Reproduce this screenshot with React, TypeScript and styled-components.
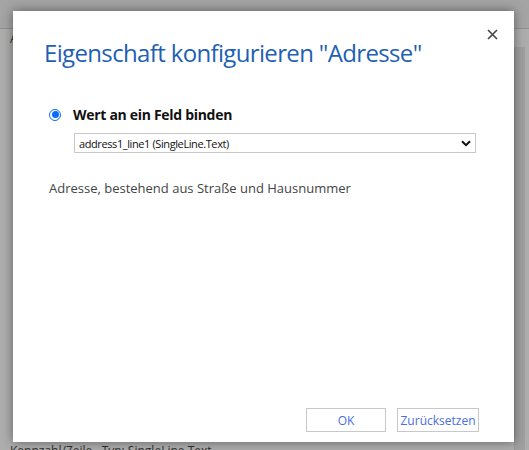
import React from "react";
import styled, { createGlobalStyle } from "styled-components";

const Global = createGlobalStyle`
  html, body { margin: 0; padding: 0; }
  body {
    width: 529px;
    height: 450px;
    overflow: hidden;
    background: #b4b4b4;
    font-family: "Open Sans", "Noto Sans", sans-serif;
  }
`;

const Page = styled.div`
  position: relative;
  width: 529px;
  height: 450px;
  display: flex;
  flex-direction: column;
  background: #f4f4f4;
`;

const TopBar = styled.div`
  height: 28px;
  border-bottom: 1px solid #d0d0d0;
  background: #f0f0f0;
`;

const PageBody = styled.div`
  flex: 1;
  display: flex;
  background: #ffffff;
`;

const PageContent = styled.div`
  flex: 1;
  display: flex;
  flex-direction: column;
  justify-content: space-between;
  padding: 2px 0 0 10px;
  color: #333;
  font-size: 12px;
  line-height: 16px;
  margin-bottom: -9px;
`;

const Scrollbar = styled.div`
  width: 10px;
  margin: 18px 4px 0 0;
  background: #e8e8e8;
  border-left: 1px solid #d8d8d8;
`;

const Overlay = styled.div`
  position: absolute;
  inset: 0;
  background: rgba(40, 40, 40, 0.38);
  display: flex;
  align-items: flex-start;
  padding: 11px 0 0 13px;
`;

const Dialog = styled.div`
  width: 501px;
  height: 431px;
  background: #ffffff;
  box-shadow: 0 0 10px rgba(0, 0, 0, 0.45);
  display: flex;
  flex-direction: column;
  box-sizing: border-box;
  padding: 24px 38px 10px 31px;
  position: relative;
`;

const Header = styled.div`
  display: flex;
  justify-content: space-between;
  align-items: flex-start;
`;

const Title = styled.h1`
  margin: 0;
  font-family: "Open Sans", sans-serif;
  font-weight: 400;
  font-size: 24px;
  line-height: 36px;
  color: #1f5fb4;
  letter-spacing: -0.65px;
`;

const CloseButton = styled.button`
  position: absolute;
  top: 16px;
  right: 14px;
  border: 0;
  background: none;
  padding: 2px;
  cursor: pointer;
  display: flex;
`;

const Option = styled.label`
  margin-top: 34px;
  margin-left: 5px;
  display: flex;
  align-items: center;
  gap: 12px;
  font-size: 14px;
  font-weight: 700;
  color: #111;
  letter-spacing: -0.3px;
`;

const Radio = styled.span`
  width: 12px;
  height: 12px;
  border-radius: 50%;
  border: 1px solid #0a6cff;
  box-sizing: border-box;
  display: flex;
  align-items: center;
  justify-content: center;
  &::after {
    content: "";
    width: 7px;
    height: 7px;
    border-radius: 50%;
    background: #0a6cff;
  }
`;

const Select = styled.div`
  margin: 9px 0 0 30px;
  height: 20px;
  border: 1px solid #c8c8c8;
  box-sizing: border-box;
  display: flex;
  align-items: center;
  justify-content: space-between;
  padding: 0 4px 0 4px;
  font-size: 11px;
  letter-spacing: -0.4px;
  color: #111;
`;

const Description = styled.p`
  margin: 26px 0 0 5px;
  font-size: 13px;
  color: #444;
`;

const Footer = styled.div`
  margin-top: auto;
  display: flex;
  justify-content: flex-end;
  gap: 11px;
  margin-right: -3px;
`;

const Button = styled.button<{ $w: number }>`
  width: ${(p) => p.$w}px;
  height: 24px;
  border: 1px solid #c8c8c8;
  background: #fff;
  color: #4a6fe0;
  font-family: "Open Sans", sans-serif;
  font-size: 12px;
  padding: 0;
`;

export default function App() {
  return (
    <>
      <Global />
      <Page>
        <TopBar />
        <PageBody>
          <PageContent>
            <div>A</div>
            <div>Kennzahl/Zeile&nbsp;&nbsp; Typ: SingleLine.Text</div>
          </PageContent>
          <Scrollbar />
        </PageBody>
        <Overlay>
          <Dialog>
            <Header>
              <Title>Eigenschaft konfigurieren "Adresse"</Title>
            </Header>
            <CloseButton aria-label="Schließen">
              <svg width="11" height="11" viewBox="0 0 11 11">
                <path d="M1 1L10 10M10 1L1 10" stroke="#444" strokeWidth="1.6" />
              </svg>
            </CloseButton>
            <Option>
              <Radio />
              Wert an ein Feld binden
            </Option>
            <Select>
              <span>address1_line1 (SingleLine.Text)</span>
              <svg width="10" height="7" viewBox="0 0 10 7">
                <path d="M1 1.2L5 5.2L9 1.2" fill="none" stroke="#111" strokeWidth="2" />
              </svg>
            </Select>
            <Description>Adresse, bestehend aus Straße und Hausnummer</Description>
            <Footer>
              <Button $w={80}>OK</Button>
              <Button $w={82}>Zurücksetzen</Button>
            </Footer>
          </Dialog>
        </Overlay>
      </Page>
    </>
  );
}
